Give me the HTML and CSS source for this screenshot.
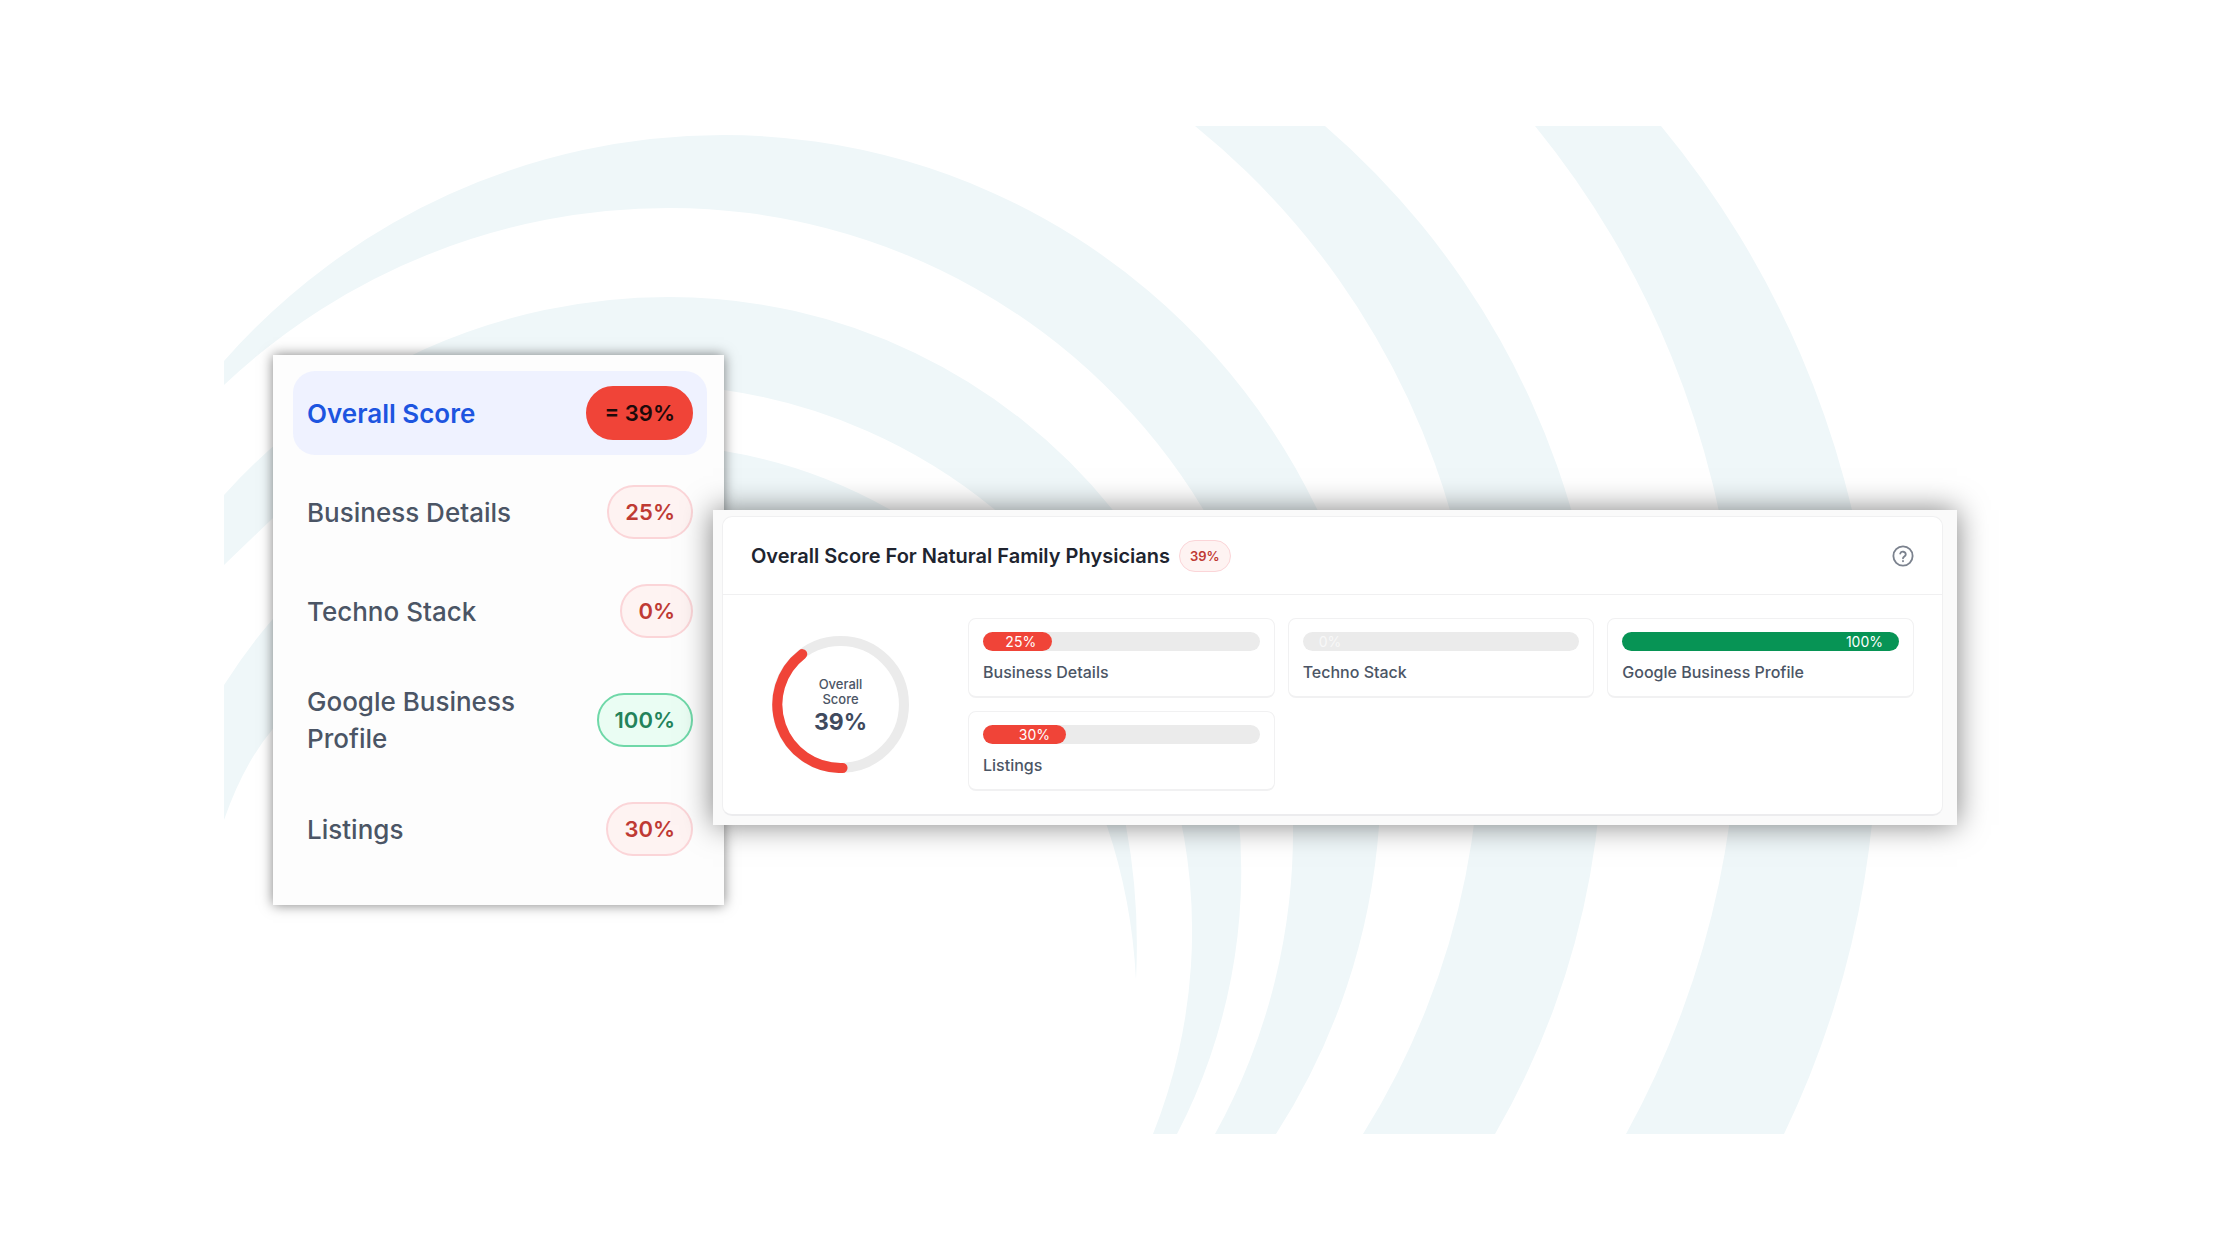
FILE: index.html
```html
<!DOCTYPE html>
<html lang="en">
<head>
    <meta charset="UTF-8">
    <meta name="viewport" content="width=device-width, initial-scale=1.0">
    <title>Overall Score</title>
    <link rel="stylesheet" href="styles.css">
</head>
<body>

    <main class="stage">
        <!-- Decorative rings -->
        <svg class="rings" viewBox="224 126 1792 1008" preserveAspectRatio="none" aria-hidden="true">
            <path d="M1661 126A941 941 0 0 1 1784 1134H1626A905 905 0 0 0 1535 126Z"/>
            <path d="M1325 126A801 801 0 0 1 1495 1134H1363A771 771 0 0 0 1195 126Z"/>
            <path d="M224 361A666 666 0 0 1 723 135A659 659 0 0 1 1317 509A657 657 0 0 1 1379 826A657 657 0 0 1 1276 1134H1215A624 624 0 0 0 1203 509A624 624 0 0 0 669 208A648 648 0 0 0 224 385Z"/>
            <path d="M224 495A599 599 0 0 1 669 297A569 569 0 0 1 1112 509A571 571 0 0 1 1177 1134H1153A548 548 0 0 0 994 509A548 548 0 0 0 724 390A560 560 0 0 0 272 519L224 565Z"/>
            <path d="M224 685Q247 649 272 620A520 520 0 0 1 724 451A500 500 0 0 1 889 509A500 500 0 0 1 1126 826Q1140 900 1136 980Q1132 900 1107 826A480 480 0 0 0 272 730Q243 765 224 820Z"/>
        </svg>

        <!-- Score list -->
        <nav class="score-list">
            <a class="score-item active" href="#overall">
                <span>Overall Score</span>
                <span class="badge solid">= 39%</span>
            </a>
            <a class="score-item" href="#business">
                <span>Business Details</span>
                <span class="badge low">25%</span>
            </a>
            <a class="score-item" href="#techno">
                <span>Techno Stack</span>
                <span class="badge low">0%</span>
            </a>
            <a class="score-item" href="#google">
                <span>Google Business Profile</span>
                <span class="badge high">100%</span>
            </a>
            <a class="score-item" href="#listings">
                <span>Listings</span>
                <span class="badge low">30%</span>
            </a>
        </nav>

        <!-- Overall score panel -->
        <section class="report" id="overall">
            <div class="panel">
                <header class="panel-header">
                    <h1>Overall Score For Natural Family Physicians</h1>
                    <span class="badge low small">39%</span>
                    <button class="help" type="button" aria-label="Help">
                        <svg viewBox="0 0 24 24" aria-hidden="true">
                            <circle cx="12" cy="12" r="10.5"/>
                            <path d="M9 9.3a3.1 3.1 0 0 1 6 1c0 2-3 2.4-3 4.2M12 17.4v.4"/>
                        </svg>
                    </button>
                </header>

                <div class="panel-body">
                    <div class="gauge">
                        <svg viewBox="0 0 136 136" aria-hidden="true">
                            <circle class="gauge-track" cx="68" cy="68" r="63"/>
                            <path class="gauge-fill" d="M70 131A63 63 0 0 1 30 18"/>
                        </svg>
                        <div class="gauge-text">
                            <span>Overall</span>
                            <span>Score</span>
                            <strong>39%</strong>
                        </div>
                    </div>

                    <div class="metrics">
                        <div class="metric" id="business">
                            <div class="bar"><div class="bar-fill low-fill" style="width: 25%">25%</div></div>
                            <p>Business Details</p>
                        </div>
                        <div class="metric" id="techno">
                            <div class="bar"><div class="bar-fill empty-fill" style="width: 0%">0%</div></div>
                            <p>Techno Stack</p>
                        </div>
                        <div class="metric" id="google">
                            <div class="bar"><div class="bar-fill high-fill" style="width: 100%">100%</div></div>
                            <p>Google Business Profile</p>
                        </div>
                        <div class="metric" id="listings">
                            <div class="bar"><div class="bar-fill low-fill" style="width: 30%">30%</div></div>
                            <p>Listings</p>
                        </div>
                    </div>
                </div>
            </div>
        </section>
    </main>

</body>
</html>
```

FILE: styles.css
```css
* {
    box-sizing: border-box;
}

body {
    margin: 0;
    background: #fff;
    color: #4b5565;
    font-family: Inter, "Liberation Sans", sans-serif;
}

/* Canvas that holds the two overlapping cards */
.stage {
    position: relative;
    display: grid;
    grid-template-columns: 451fr 1233fr;
    align-items: center;
    min-height: 80vh;
    margin: 10vh 10vw;
    padding: 0 59px 0 49px;
}

.rings {
    position: absolute;
    inset: 0;
    width: 100%;
    height: 100%;
    fill: #eff7f9;
}

/* Score list */
.score-list {
    position: relative;
    display: flex;
    flex-direction: column;
    gap: 15px;
    padding: 16px 17px 34px 20px;
    background: #fdfdfd;
    box-shadow: 0 0 12px rgba(0, 0, 0, 0.5);
}

.score-item {
    display: flex;
    align-items: center;
    justify-content: space-between;
    gap: 40px;
    padding: 15px 14px;
    border-radius: 22px;
    color: #4b5565;
    font-size: 26px;
    font-weight: 500;
    line-height: 37px;
    text-decoration: none;
}

.score-item.active {
    background: #eff2ff;
    color: #1d55e0;
    font-weight: 600;
}

.badge {
    padding: 7px 16px;
    border: 2px solid;
    border-radius: 27px;
    font-size: 22px;
    font-weight: 600;
    line-height: 36px;
    white-space: nowrap;
}

.badge.solid {
    border-color: #f04438;
    background: #f04438;
    color: #1d0a0a;
}

.badge.low {
    border-color: #fbd5d8;
    background: #fef3f2;
    color: #bf3a34;
}

.badge.high {
    border-color: #6fd8a8;
    background: #eafdf3;
    color: #23825a;
}

.badge.small {
    padding: 5px 10px;
    border-width: 1px;
    border-radius: 16px;
    font-size: 13px;
    line-height: 20px;
}

/* Overall score panel */
.report {
    position: relative;
    margin: 75px 0 0 -11px;
    padding: 6px 14px 9px 9px;
    background: #fafafa;
    box-shadow: 0 0 28px rgba(0, 0, 0, 0.5);
}

.panel {
    border: 1px solid #f0f0f1;
    border-bottom: 2px solid #ececee;
    border-radius: 10px;
    background: #fff;
}

.panel-header {
    display: flex;
    align-items: center;
    gap: 9px;
    padding: 23px 28px 22px;
    border-bottom: 1px solid #f0f0f1;
}

.panel-header h1 {
    margin: 0;
    color: #20242f;
    font-size: 20px;
    font-weight: 600;
    line-height: 30px;
}

.help {
    width: 22px;
    height: 22px;
    margin-left: auto;
    padding: 0;
    border: none;
    background: none;
    cursor: pointer;
}

.help svg {
    display: block;
    fill: none;
    stroke: #7b828e;
    stroke-width: 2;
    stroke-linecap: round;
}

.panel-body {
    display: flex;
    align-items: center;
    gap: 59px;
    padding: 23px 28px 23px 49px;
}

.gauge {
    position: relative;
    flex: none;
    width: 137px;
    height: 137px;
}

.gauge svg {
    display: block;
    fill: none;
    stroke-width: 10;
    stroke-linecap: round;
}

.gauge-track {
    stroke: #ebebeb;
}

.gauge-fill {
    stroke: #f04438;
}

.gauge-text {
    position: absolute;
    inset: 0;
    display: flex;
    flex-direction: column;
    align-items: center;
    justify-content: center;
    padding-top: 4px;
    font-size: 13px;
    font-weight: 500;
    line-height: 15px;
}

.gauge-text strong {
    color: #3f4a5e;
    font-size: 23px;
    font-weight: 700;
    line-height: 30px;
}

.metrics {
    display: grid;
    flex: 1;
    grid-template-columns: repeat(3, 1fr);
    gap: 13px;
}

.metric {
    padding: 13px 14px 12px;
    border: 1px solid #f1f1f2;
    border-bottom-width: 2px;
    border-radius: 8px;
}

.metric p {
    margin: 9px 0 0;
    font-size: 16px;
    font-weight: 500;
    line-height: 24px;
}

.bar {
    height: 19px;
    border-radius: 10px;
    background: #ebebeb;
}

.bar-fill {
    height: 19px;
    padding: 0 16px;
    border-radius: 10px;
    color: #fff;
    font-size: 14px;
    line-height: 20px;
    text-align: right;
}

.low-fill {
    background: #f04438;
}

.high-fill {
    background: #079455;
}

.empty-fill {
    color: #f8f8f8;
}
```
